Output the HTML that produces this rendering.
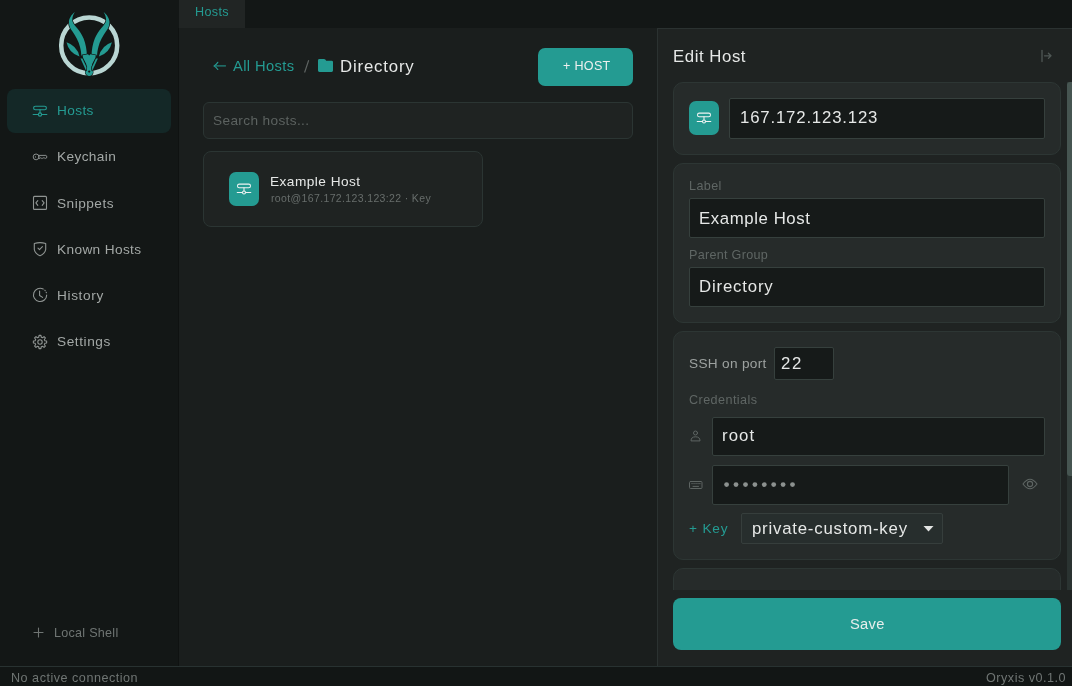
<!DOCTYPE html>
<html><head><meta charset="utf-8"><style>
*{margin:0;padding:0;box-sizing:border-box}
html,body{width:1072px;height:686px;overflow:hidden;background:#1a1e1d;font-family:"Liberation Sans",sans-serif}
.a{position:absolute}
.t{position:absolute;white-space:pre;line-height:1;will-change:transform}
svg{position:absolute;overflow:visible}

</style></head><body>
<!-- sidebar -->
<div class="a" style="left:0;top:0;width:179px;height:666px;background:#131716"></div>
<div class="a" style="left:178px;top:28px;width:1px;height:638px;background:#0f1211"></div>
<!-- tab bar -->
<div class="a" style="left:179px;top:0;width:893px;height:28px;background:#131716"></div>
<div class="a" style="left:179px;top:0;width:66px;height:28px;background:#212524"></div>
<!-- main -->
<div class="a" style="left:179px;top:28px;width:478px;height:638px;background:#1a1e1d"></div>
<!-- edit panel -->
<div class="a" style="left:657px;top:28px;width:415px;height:638px;background:#1f2322;border-left:1px solid #2b3231;border-top:1px solid #2b3231"></div>
<!-- status bar -->
<div class="a" style="left:0;top:666px;width:1072px;height:20px;background:#121615;border-top:1px solid #283231"></div>

<!-- logo -->
<svg style="left:0;top:0" width="180" height="90" viewBox="0 0 180 90">
  <circle cx="89.2" cy="45.4" r="28" fill="none" stroke="#b9d6d3" stroke-width="4.5"/>
</svg>

<!-- active nav -->
<div class="a" style="left:7px;top:89px;width:164px;height:44px;background:#142827;border-radius:8px"></div>

<!-- add host button -->
<div class="a" style="left:538px;top:48px;width:95px;height:38px;background:#249b92;border-radius:7px"></div>
<!-- search -->
<div class="a" style="left:203px;top:102px;width:430px;height:37px;background:#1f2322;border:1px solid #2b3533;border-radius:6px"></div>
<!-- host card -->
<div class="a" style="left:203px;top:151px;width:280px;height:76px;background:#1f2322;border:1px solid #2b3533;border-radius:8px"></div>
<div class="a" style="left:229px;top:172px;width:30px;height:34px;background:#249b92;border-radius:7px"></div>

<!-- edit panel cards -->
<div class="a" style="left:673px;top:82px;width:388px;height:73px;background:#262b2a;border:1px solid #2d3634;border-radius:10px"></div>
<div class="a" style="left:689px;top:101px;width:30px;height:34px;background:#249b92;border-radius:7px"></div>
<div class="a" style="left:729px;top:98px;width:316px;height:41px;background:#161a19;border:1px solid #36403d;border-radius:2px"></div>

<div class="a" style="left:673px;top:163px;width:388px;height:160px;background:#262b2a;border:1px solid #2d3634;border-radius:10px"></div>
<div class="a" style="left:689px;top:198px;width:356px;height:40px;background:#161a19;border:1px solid #36403d;border-radius:2px"></div>
<div class="a" style="left:689px;top:267px;width:356px;height:40px;background:#161a19;border:1px solid #36403d;border-radius:2px"></div>

<div class="a" style="left:673px;top:331px;width:388px;height:229px;background:#262b2a;border:1px solid #2d3634;border-radius:10px"></div>
<div class="a" style="left:774px;top:347px;width:60px;height:33px;background:#161a19;border:1px solid #36403d;border-radius:2px"></div>
<div class="a" style="left:712px;top:417px;width:333px;height:39px;background:#161a19;border:1px solid #36403d;border-radius:2px"></div>
<div class="a" style="left:712px;top:465px;width:297px;height:40px;background:#161a19;border:1px solid #36403d;border-radius:2px"></div>
<div class="a" style="left:741px;top:513px;width:202px;height:31px;background:#272e2d;border:1px solid #363e3c;border-radius:2px"></div>

<div class="a" style="left:673px;top:568px;width:388px;height:22px;overflow:hidden"><div class="a" style="left:0;top:0;width:388px;height:60px;background:#262b2a;border:1px solid #2d3634;border-radius:10px"></div></div>

<!-- scrollbar -->
<div class="a" style="left:1067px;top:82px;width:5px;height:508px;background:#2a3331"></div>
<div class="a" style="left:1067px;top:82px;width:5px;height:394px;background:#465551;border-radius:3px 0 0 3px"></div>

<!-- save -->
<div class="a" style="left:673px;top:598px;width:388px;height:52px;background:#249b92;border-radius:8px"></div>

<!-- LOGO -->
<svg style="left:0;top:0" width="180" height="90" viewBox="0 0 180 90">
  <g fill="#249b92" stroke="#131716" stroke-width="1.4" paint-order="stroke">
    <path d="M74.8,12 C71.5,14.5 69,18.5 68.9,22 C68.8,26 70.5,29 72.5,31.5 C75.5,36 78.7,41 80,47 C80.8,50 81.2,52.5 81.3,55.5 L86.9,55.5 C86.7,50 85.8,44 83.6,38.5 C81.7,34 79.5,31 77,28 C74.5,25 72.4,23 72.3,20.5 C72.2,17.5 73.2,14.5 74.8,12 Z"/>
    <path d="M103.6,12 C106.9,14.5 109.4,18.5 109.5,22 C109.6,26 107.9,29 105.9,31.5 C102.9,36 99.7,41 98.4,47 C97.6,50 97.2,52.5 97.1,55.5 L91.5,55.5 C91.7,50 92.6,44 94.8,38.5 C96.7,34 98.9,31 101.4,28 C103.9,25 106.0,23 106.1,20.5 C106.2,17.5 105.2,14.5 103.6,12 Z"/>
    <path d="M66.5,42.3 Q68.8,53 79.5,56.6 Q77,45.6 66.5,42.3 Z"/>
    <path d="M111.9,42.3 Q109.6,53 98.9,56.6 Q101.4,45.6 111.9,42.3 Z"/>
    <path d="M82.6,55.2 L88,54.2 L89.2,55.6 L90.4,54.2 L95.8,55.2 L95.3,58 L92.2,64 L91.6,69.5 A3.6,3.6 0 1 1 86.8,69.5 L86.2,64 L83.1,58 Z"/>
    <path d="M80.5,58.6 L82.4,58.6 L86.4,67 L86.2,71 Z"/>
    <path d="M97.9,58.6 L96,58.6 L92,67 L92.2,71 Z"/>
  </g>
  <circle cx="89.2" cy="71.6" r="1.1" fill="#131716"/>
</svg>

<!-- NAV ICONS -->
<svg style="left:0;top:0" width="180" height="400" viewBox="0 0 180 400" fill="none" stroke-linecap="round" stroke-linejoin="round">
  <g stroke="#249b92" stroke-width="1.15">
    <rect x="33.6" y="106.2" width="12.8" height="3.6" rx="1.8"/>
    <line x1="40" y1="109.8" x2="40" y2="112.9"/>
    <line x1="33.2" y1="114.5" x2="38.3" y2="114.5"/>
    <line x1="41.7" y1="114.5" x2="46.8" y2="114.5"/>
    <circle cx="40" cy="114.5" r="1.6"/>
  </g>
  <g stroke="#8f9492" stroke-width="1.1">
    <!-- key -->
    <circle cx="36.1" cy="156.9" r="2.9" stroke-width="0.95"/>
    <path stroke-width="0.95" d="M38.9,155.4 L45.9,155.4 Q46.8,155.6 46.8,156.9 Q46.8,158.2 45.9,158.4 L45.5,158.4 L44.8,157.8 L44.1,158.4 L43.4,157.8 L42.7,158.4 L42,157.8 L41.3,158.4 L40.6,157.8 L39.9,158.4 L38.9,158.4"/>
    <circle cx="35.5" cy="156.9" r="0.6" fill="#8f9492" stroke="none"/>
    <!-- snippets -->
    <rect x="33.5" y="196.4" width="13" height="13" rx="1"/>
    <path d="M37.8,200.6 L35.9,202.9 L37.8,205.4"/>
    <path d="M42.2,200.6 L44.1,202.9 L42.2,205.4"/>
    <!-- shield -->
    <path d="M34.3,243.6 Q40,241.6 45.7,243.6 L45.7,249.5 Q45,253.5 40,255.7 Q35,253.5 34.3,249.5 Z"/>
    <path d="M38,248.2 L39.5,249.6 L42.4,246.6"/>
    <!-- clock -->
    <path d="M43.2,289.1 A6.6,6.6 0 1 0 46.7,295"/>
    <path d="M44.9,290.2 L45.2,290.7 M46.2,292.3 L46.4,292.8" />
    <path d="M39.6,291 L39.6,295.5 L42.6,297.4"/>
    <!-- gear -->
    <path d="M44.62,340.09 L44.84,340.76 L46.63,341.06 L46.63,342.94 L44.84,343.24 L44.62,343.91 L44.30,344.55 L45.36,346.02 L44.02,347.36 L42.55,346.30 L41.91,346.62 L41.24,346.84 L40.94,348.63 L39.06,348.63 L38.76,346.84 L38.09,346.62 L37.45,346.30 L35.98,347.36 L34.64,346.02 L35.70,344.55 L35.38,343.91 L35.16,343.24 L33.37,342.94 L33.37,341.06 L35.16,340.76 L35.38,340.09 L35.70,339.45 L34.64,337.98 L35.98,336.64 L37.45,337.70 L38.09,337.38 L38.76,337.16 L39.06,335.37 L40.94,335.37 L41.24,337.16 L41.91,337.38 L42.55,337.70 L44.02,336.64 L45.36,337.98 L44.30,339.45 Z"/>
    <circle cx="40" cy="342" r="2.2"/>
  </g>
</svg>

<!-- OTHER ICONS -->
<svg style="left:0;top:0" width="1072" height="686" viewBox="0 0 1072 686" fill="none" stroke-linecap="round" stroke-linejoin="round">
  <!-- local shell plus -->
  <g stroke="#6f7573" stroke-width="1.1">
    <line x1="38.5" y1="628" x2="38.5" y2="637"/>
    <line x1="34" y1="632.5" x2="43" y2="632.5"/>
  </g>
  <!-- breadcrumb arrow -->
  <g stroke="#249b92" stroke-width="1.15">
    <path d="M217.8,62.3 Q216,64.9 214,65.9 Q216,66.9 217.8,69.5"/>
    <path d="M214.6,65.9 L225.9,65.9" stroke-linecap="butt" stroke-width="1.2" stroke="#238c84"/>
  </g>
  <line x1="308.7" y1="60.3" x2="304.6" y2="72.5" stroke="#626866" stroke-width="1.1" stroke-linecap="butt"/>
  <!-- folder -->
  <path d="M318,60.4 Q318,59 319.4,59 L324,59 Q324.8,59 325.3,59.6 L326.2,60.7 L331.6,60.7 Q333,60.7 333,62.1 L333,70.6 Q333,72 331.6,72 L319.4,72 Q318,72 318,70.6 Z" fill="#249b92"/>
  <!-- host card icon glyph -->
  <g stroke="#eef3f2" stroke-width="1.05">
    <rect x="237.5" y="184.1" width="13" height="3.6" rx="1.8"/>
    <line x1="244" y1="187.7" x2="244" y2="190.8"/>
    <line x1="237.2" y1="192.4" x2="242.4" y2="192.4"/>
    <line x1="245.6" y1="192.4" x2="250.8" y2="192.4"/>
    <circle cx="244" cy="192.4" r="1.5"/>
  </g>
  <g stroke="#eef3f2" stroke-width="1.05">
    <rect x="697.5" y="113.1" width="13" height="3.6" rx="1.8"/>
    <line x1="704" y1="116.7" x2="704" y2="119.8"/>
    <line x1="697.2" y1="121.4" x2="702.4" y2="121.4"/>
    <line x1="705.6" y1="121.4" x2="710.8" y2="121.4"/>
    <circle cx="704" cy="121.4" r="1.5"/>
  </g>
  <!-- collapse icon -->
  <g stroke="#4f5755" stroke-width="1.3">
    <line x1="1042" y1="50.5" x2="1042" y2="61.5"/>
    <path d="M1044.5,55.8 L1051,55.8 M1048.4,53.2 L1051,55.8 L1048.4,58.4"/>
  </g>
  <!-- user icon -->
  <g stroke="#5e6563" stroke-width="1">
    <circle cx="695.5" cy="433" r="2"/>
    <path d="M691,440.5 Q691,436.8 695.5,436.8 Q700,436.8 700,440.5 Z"/>
  </g>
  <!-- keyboard icon -->
  <g stroke="#5e6563" stroke-width="1">
    <rect x="689.5" y="481.5" width="12.5" height="7" rx="1"/>
    <path d="M691.8,483.6 L692.3,483.6 M693.8,483.6 L694.3,483.6 M695.8,483.6 L696.3,483.6 M697.8,483.6 L698.3,483.6 M699.6,483.6 L700.1,483.6"/>
    <path d="M693,486.4 L698.5,486.4"/>
  </g>
  <!-- eye -->
  <g stroke="#5e6563" stroke-width="1.1">
    <path d="M1023,484 Q1030,474.5 1037,484 Q1030,493.5 1023,484 Z"/>
    <circle cx="1030" cy="484" r="2.6"/>
  </g>
  <!-- password dots -->
  <g fill="#8c918f">
    <circle cx="726.6" cy="484.6" r="2.4"/><circle cx="736" cy="484.6" r="2.4"/><circle cx="745.5" cy="484.6" r="2.4"/><circle cx="754.9" cy="484.6" r="2.4"/>
    <circle cx="764.3" cy="484.6" r="2.4"/><circle cx="773.7" cy="484.6" r="2.4"/><circle cx="783.1" cy="484.6" r="2.4"/><circle cx="792.5" cy="484.6" r="2.4"/>
  </g>
  <!-- dropdown triangle -->
  <path d="M923.5,526 L933.5,526 L928.5,531.5 Z" fill="#e2e4e3"/>
</svg>

<div id="t_tab" class="t" style="left:195.4px;top:6.34px;font-size:12.60px;color:#249b92;letter-spacing:0.344px;">Hosts</div>
<div id="t_allhosts" class="t" style="left:233px;top:58.86px;font-size:14.70px;color:#249b92;letter-spacing:0.379px;">All Hosts</div>
<div id="t_dir" class="t" style="left:340px;top:59.09px;font-size:16.80px;color:#e6e8e7;letter-spacing:0.826px;">Directory</div>
<div id="t_addhost" class="t" style="left:562.8px;top:59.64px;font-size:12.60px;color:#eef0ef;letter-spacing:0.291px;">+ HOST</div>
<div id="t_search" class="t" style="left:212.5px;top:113.65px;font-size:13.65px;color:#5c6260;letter-spacing:0.360px;">Search hosts...</div>
<div id="t_hname" class="t" style="left:270.0px;top:174.95px;font-size:13.65px;color:#e6e8e7;letter-spacing:0.474px;">Example Host</div>
<div id="t_hsub" class="t" style="left:271px;top:193.12px;font-size:10.50px;color:#676d6b;letter-spacing:0.360px;">root@167.172.123.123:22 · Key</div>
<div id="n_hosts" class="t" style="left:57.3px;top:104.45px;font-size:13.65px;color:#249b92;letter-spacing:0.375px;">Hosts</div>
<div id="n_key" class="t" style="left:57.3px;top:150.45px;font-size:13.65px;color:#a3a8a6;letter-spacing:0.379px;">Keychain</div>
<div id="n_snip" class="t" style="left:57.3px;top:197.25px;font-size:13.65px;color:#a3a8a6;letter-spacing:0.484px;">Snippets</div>
<div id="n_known" class="t" style="left:57.3px;top:243.45px;font-size:13.65px;color:#a3a8a6;letter-spacing:0.372px;">Known Hosts</div>
<div id="n_hist" class="t" style="left:57.3px;top:289.45px;font-size:13.65px;color:#a3a8a6;letter-spacing:0.633px;">History</div>
<div id="n_set" class="t" style="left:57.3px;top:335.45px;font-size:13.65px;color:#a3a8a6;letter-spacing:0.576px;">Settings</div>
<div id="t_local" class="t" style="left:53.5px;top:626.84px;font-size:12.60px;color:#6f7573;letter-spacing:0.258px;">Local Shell</div>
<div id="t_status" class="t" style="left:11.25px;top:671.84px;font-size:12.60px;color:#6f7573;letter-spacing:0.507px;">No active connection</div>
<div id="t_edit" class="t" style="left:673.0px;top:48.79px;font-size:16.80px;color:#e6e8e7;letter-spacing:0.551px;">Edit Host</div>
<div id="t_ip" class="t" style="left:740px;top:109.99px;font-size:16.80px;color:#e6e8e7;letter-spacing:0.817px;">167.172.123.123</div>
<div id="t_label" class="t" style="left:688.5px;top:179.54px;font-size:12.60px;color:#5f6664;letter-spacing:0.387px;">Label</div>
<div id="t_exhost" class="t" style="left:699.4px;top:210.69px;font-size:16.80px;color:#e6e8e7;letter-spacing:0.588px;">Example Host</div>
<div id="t_parent" class="t" style="left:688.5px;top:249.34px;font-size:12.60px;color:#5f6664;letter-spacing:0.287px;">Parent Group</div>
<div id="t_dir2" class="t" style="left:699.4px;top:278.79px;font-size:16.80px;color:#e6e8e7;letter-spacing:0.826px;">Directory</div>
<div id="t_ssh" class="t" style="left:688.5px;top:356.75px;font-size:13.65px;color:#9da2a0;letter-spacing:0.308px;">SSH on port</div>
<div id="t_port" class="t" style="left:781px;top:355.69px;font-size:16.80px;color:#e6e8e7;letter-spacing:1.688px;">22</div>
<div id="t_cred" class="t" style="left:688.5px;top:393.94px;font-size:12.60px;color:#5f6664;letter-spacing:0.431px;">Credentials</div>
<div id="t_root" class="t" style="left:721.5px;top:427.79px;font-size:16.80px;color:#e6e8e7;letter-spacing:1.052px;">root</div>
<div id="t_pkey" class="t" style="left:689.0px;top:522.05px;font-size:13.65px;color:#249b92;letter-spacing:0.832px;">+ Key</div>
<div id="t_sel" class="t" style="left:751.7px;top:521.39px;font-size:16.80px;color:#e6e8e7;letter-spacing:0.782px;">private-custom-key</div>
<div id="t_save" class="t" style="left:849.7px;top:616.76px;font-size:14.70px;color:#e6eeec;letter-spacing:0.297px;">Save</div>
<div id="t_ver" class="t" style="left:986px;top:672.14px;font-size:12.60px;color:#6f7573;letter-spacing:0.512px;">Oryxis v0.1.0</div>
</body></html>
